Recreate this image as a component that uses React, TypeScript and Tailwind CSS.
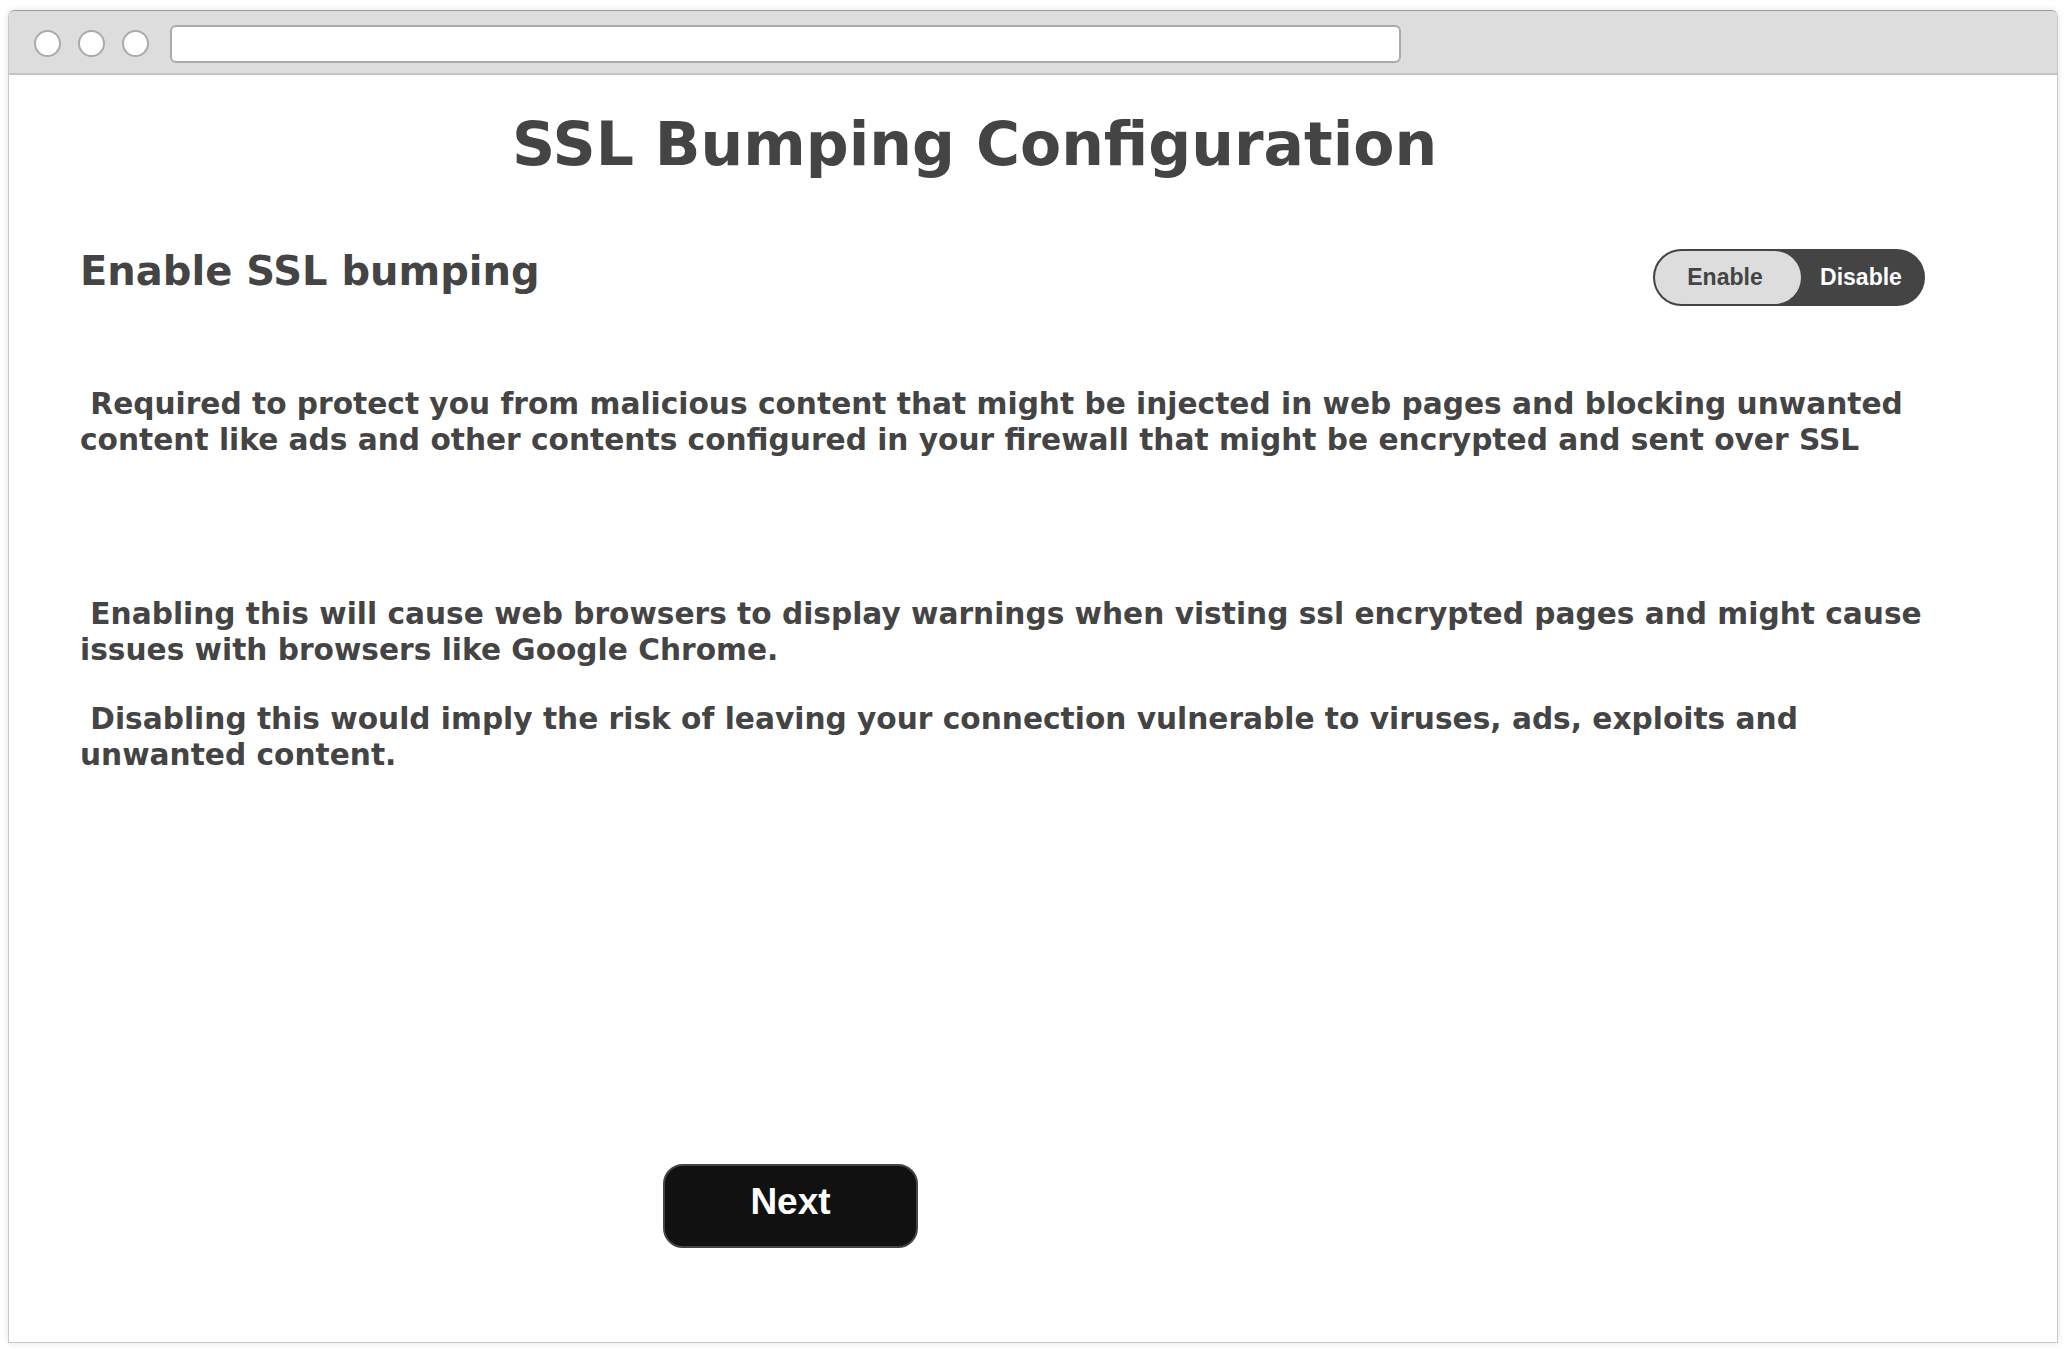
export default function App() {
  const body = "[font-family:'DejaVu_Sans',sans-serif] font-bold text-[#444444]"

  return (
    <div className="w-[2065px] h-[1349px] bg-white pt-[10px] pl-[8px] overflow-hidden">
      {/* Browser window */}
      <div className="w-[2050px] h-[1333px] flex flex-col border border-[#c8c8c8] border-t-[#9a9a9a] rounded-t-[7px] shadow-[0_0_6px_rgba(0,0,0,0.12)] bg-white">
        {/* Chrome bar */}
        <div className="h-[64px] shrink-0 flex items-center pl-[25px] pt-[3px] bg-[#dddddd] border-b-2 border-[#c4c4c4] rounded-t-[6px]">
          <div className="flex gap-[17px]">
            <span className="w-[27px] h-[27px] rounded-full bg-white border-2 border-[#aaaaaa]" />
            <span className="w-[27px] h-[27px] rounded-full bg-white border-2 border-[#aaaaaa]" />
            <span className="w-[27px] h-[27px] rounded-full bg-white border-2 border-[#aaaaaa]" />
          </div>
          <div className="ml-[21px] w-[1231px] h-[38px] rounded-[6px] bg-white border-2 border-[#aaaaaa]" />
        </div>

        {/* Page */}
        <div className="flex-1 flex flex-col">
          <h1 className={`${body} mt-[34px] pl-[503px] text-[60px] leading-[70px]`}>
            SSL Bumping Configuration
          </h1>

          <div className="mt-[69px] pl-[71px] pr-[132px] flex items-start justify-between">
            <h2 className={`${body} text-[40px] leading-[47px]`}>Enable SSL bumping</h2>
            <div className="mt-px w-[272px] h-[57px] flex rounded-full bg-[#444444] border-2 border-[#444444] [font-family:'Liberation_Sans',Arial,sans-serif] font-bold text-[23px]">
              <button className="w-[146px] h-full rounded-full bg-[#dddddd] text-[#444444] flex items-center justify-center pr-[6px]">
                Enable
              </button>
              <button className="flex-1 h-full text-white flex items-center justify-center pr-[2px]">
                Disable
              </button>
            </div>
          </div>

          <div className={`${body} pl-[71px] text-[29.65px] leading-[35.5px] whitespace-nowrap`}>
            <p className="mt-[80px]">
              {'\u00a0'}Required to protect you from malicious content that might be injected in web pages and blocking unwanted
              <br />
              content like ads and other contents configured in your firewall that might be encrypted and sent over SSL
            </p>
            <p className="mt-[139px]">
              {'\u00a0'}Enabling this will cause web browsers to display warnings when visting ssl encrypted pages and might cause
              <br />
              issues with browsers like Google Chrome.
            </p>
            <p className="mt-[34px]">
              {'\u00a0'}Disabling this would imply the risk of leaving your connection vulnerable to viruses, ads, exploits and
              <br />
              unwanted content.
            </p>
          </div>

          <div className="mt-[392px] pl-[654px]">
            <button className="w-[255px] h-[84px] rounded-[20px] bg-[#111111] border-2 border-[#444444] text-white [font-family:'Liberation_Sans',Arial,sans-serif] font-bold text-[37px] pb-[8px]">
              Next
            </button>
          </div>
        </div>
      </div>
    </div>
  )
}
